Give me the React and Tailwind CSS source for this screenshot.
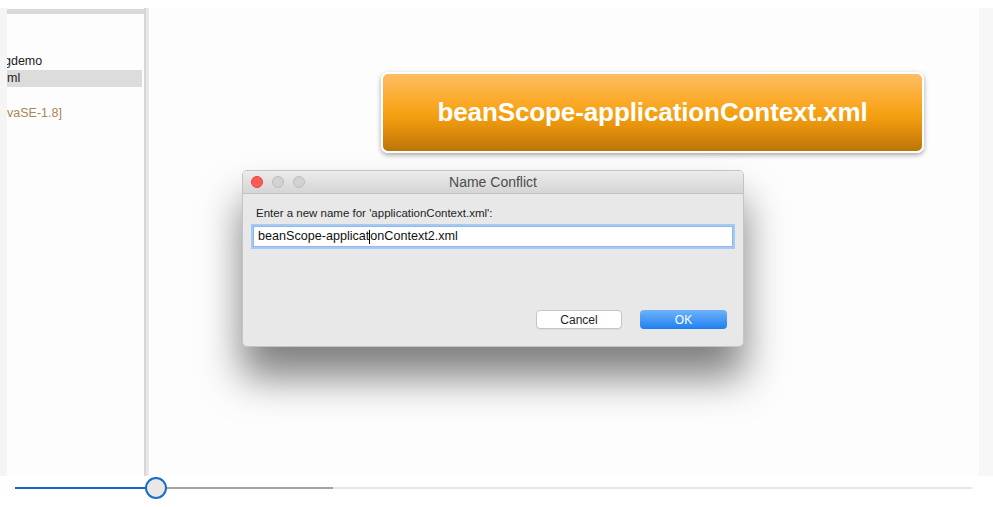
import React from 'react';

// 左侧的项目树（只露出一部分）
function Sidebar() {
  return (
    <div className="w-[137px] flex flex-col bg-[#fdfdfd]">
      <div className="h-[5px] mt-px bg-[#d9d9d9]" />
      <div className="mt-[39px] text-[12.5px] leading-[17px] text-[#222] -ml-[3px] whitespace-nowrap">gdemo</div>
      <div className="h-[17px] bg-[#dcdcdc] text-[12.5px] leading-[17px] text-[#222] whitespace-nowrap mr-[2px]">ml</div>
      <div className="mt-[18px] text-[12.5px] leading-[17px] text-[#a88657] whitespace-nowrap">vaSE-1.8]</div>
    </div>
  );
}

// 弹出的对话框
function NameConflictDialog() {
  return (
    <div className="w-[502px] h-[177px] ml-[93px] mt-[17px] rounded-[5px] bg-[#e8e8e8] border border-[#c4c4c4] shadow-[0_30px_40px_rgba(0,0,0,0.5)] flex flex-col overflow-hidden">
      {/* 标题栏 */}
      <div className="h-[23px] relative flex items-center justify-center bg-linear-to-b from-[#ececec] to-[#d5d5d5] border-b border-[#c2c2c2]">
        <div className="absolute left-[8px] top-[5px] flex gap-[9px]">
          <span className="w-[12px] h-[12px] rounded-full bg-[#fc5c56] border border-[#e2463f]" />
          <span className="w-[12px] h-[12px] rounded-full bg-[#d2d2d2] border border-[#bdbdbd]" />
          <span className="w-[12px] h-[12px] rounded-full bg-[#d2d2d2] border border-[#bdbdbd]" />
        </div>
        <span className="text-[14px] text-[#4d4d4d]">Name Conflict</span>
      </div>

      {/* 内容 */}
      <div className="flex flex-col px-[10px]">
        <div className="mt-[12px] ml-[3px] text-[11.5px] leading-[14px] text-[#1e1e1e]">
          Enter a new name for 'applicationContext.xml':
        </div>
        <div className="mt-[6px] h-[21px] bg-white border border-[#8fb8ef] ring-[2px] ring-[#a6c8f3] flex items-center px-[4px] text-[12.6px] text-[#111]">
          beanScope-applicat
          <span className="inline-block w-px h-[14px] bg-black" />
          onContext2.xml
        </div>
        <div className="mt-[63px] flex justify-end gap-[18px] pr-[6px]">
          <button className="w-[86px] h-[19px] rounded-[4px] bg-white border border-[#c5c5c5] text-[12px] text-[#1e1e1e] shadow-[0_1px_0_rgba(0,0,0,0.05)]">
            Cancel
          </button>
          <button className="w-[87px] h-[19px] rounded-[4px] bg-linear-to-b from-[#6cb3fa] to-[#1b7ff0] text-[12px] text-white">
            OK
          </button>
        </div>
      </div>
    </div>
  );
}

export default function App() {
  return (
    <div className="w-[993px] h-[507px] bg-white flex flex-col overflow-hidden font-['Liberation_Sans',Arial,sans-serif]">
      <div className="h-[8px] shrink-0" />

      {/* 视频画面 */}
      <div className="h-[468px] flex shrink-0">
        <div className="w-[7px] bg-[#f5f5f5]" />
        <div className="w-[972px] flex bg-[#fdfdfd] overflow-hidden">
          <Sidebar />
          <div className="w-[5px] flex">
            <div className="w-[2px] bg-[#d6d6d6]" />
            <div className="w-[3px] bg-[#e8e8e8]" />
          </div>
          <div className="flex-1 flex flex-col">
            <div className="mt-[64px] ml-[232px] w-[543px] h-[81px] rounded-[7px] border-2 border-white shadow-[0_2px_5px_rgba(0,0,0,0.35)] bg-[linear-gradient(to_bottom,#fdbd63_0%,#fbaa2a_35%,#f39f10_55%,#d9870b_80%,#b97509_100%)] flex items-center justify-center">
              <span className="text-[26px] font-bold text-white tracking-[-0.1px]">beanScope-applicationContext.xml</span>
            </div>
            <NameConflictDialog />
          </div>
        </div>
        <div className="flex-1 bg-[#f7f7f7]" />
      </div>

      {/* 进度条 */}
      <div className="relative h-[31px] shrink-0">
        <div className="absolute left-[15px] top-[11px] flex items-center w-[957px] h-[2px]">
          <div className="w-[131px] h-[2px] bg-[#1565c0]" />
          <div className="w-[187px] h-[2px] bg-[#a3a3a3]" />
          <div className="flex-1 h-[2px] bg-[#e6e6e6]" />
        </div>
        <div className="absolute left-[145px] top-[1px] w-[22px] h-[22px] rounded-full bg-[#e8e8e8] border-2 border-[#1a6ec2]" />
      </div>
    </div>
  );
}
